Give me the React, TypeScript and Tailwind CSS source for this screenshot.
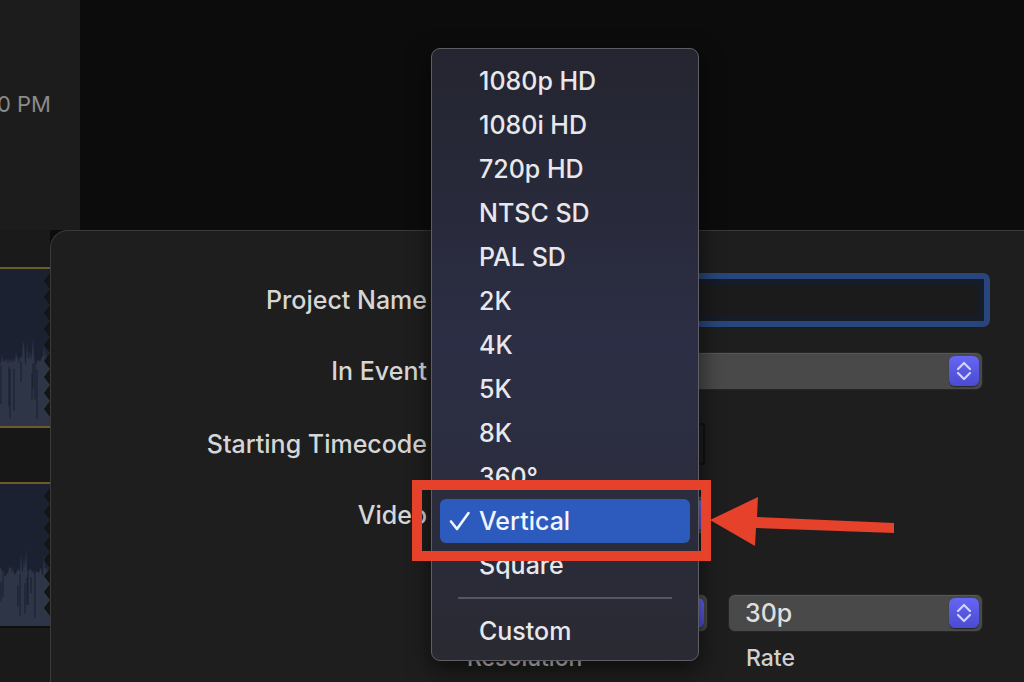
import React from "react";

function rand(seed: number) {
  let s = seed;
  return () => {
    s = (s * 16807) % 2147483647;
    return (s - 1) / 2147483646;
  };
}

function wavePath(seed: number, w: number, h: number, base: number, amp: number) {
  const r = rand(seed);
  let d = `M0 ${h}`;
  for (let x = 0; x <= w; x += 1) {
    const big = r() > 0.82 ? 2.2 : 0.7;
    const y = base - r() * amp * big;
    d += ` L${x} ${y.toFixed(1)}`;
  }
  d += ` L${w} ${h} Z`;
  return d;
}

function darkSpikes(seed: number, w: number, top: number, bottom: number) {
  const r = rand(seed);
  let d = "";
  for (let i = 0; i < 9; i++) {
    const x = Math.floor(r() * (w - 6)) + 1;
    const y1 = top + r() * 15;
    const y2 = y1 + 15 + r() * (bottom - y1 - 15);
    d += `M${x} ${y1.toFixed(1)} L${x} ${y2.toFixed(1)} `;
  }
  return d;
}

function zigzag(h: number, start: number) {
  let d = `M50 ${start}`;
  for (let y = start; y + 16 <= h; y += 16) {
    d += ` L44 ${y + 8} L50 ${y + 16}`;
  }
  d += " Z";
  return d;
}

function Clip({ h, seed, base, amp, goldBottom }: { h: number; seed: number; base: number; amp: number; goldBottom: boolean }) {
  return (
    <div className="flex flex-col" style={{ height: h }}>
      <div className="h-[2px] bg-[#6f5b27]" />
      <svg width="50" height={h - 4} viewBox={`0 0 50 ${h - 4}`} className="block">
        <rect x="0" y="0" width="50" height={h - 4} fill="#1b2131" />
        <path d={wavePath(seed, 50, h - 4, base, amp)} fill="#2d3547" />
        <path d={darkSpikes(seed + 7, 44, base - 5, h - 10)} stroke="#1c2232" strokeWidth="1.2" />
        <path d={zigzag(h - 4, 4)} fill="#141414" />
      </svg>
      <div className={goldBottom ? "h-[2px] bg-[#6f5b27]" : "h-[2px] bg-[#0e0e0e]"} />
    </div>
  );
}

function Stepper() {
  return (
    <div className="w-[30px] h-[30px] rounded-[6px] bg-linear-to-b from-[#6666f4] to-[#4a4ad2] flex items-center justify-center shadow-[0_1px_1px_rgba(0,0,0,0.5)]">
      <svg width="16" height="20" viewBox="0 0 16 20" fill="none">
        <path d="M2 8 L8 2 L14 8" stroke="#d2d2ff" strokeWidth="2.2" strokeLinecap="round" strokeLinejoin="round" />
        <path d="M2 12 L8 18 L14 12" stroke="#d2d2ff" strokeWidth="2.2" strokeLinecap="round" strokeLinejoin="round" />
      </svg>
    </div>
  );
}

function Popup({ w, children }: { w: number; children?: React.ReactNode }) {
  return (
    <div
      className="h-[38px] rounded-[7px] bg-[#494949] border border-[#262626] shadow-[inset_0_1px_0_rgba(255,255,255,0.08)] flex items-center justify-between pl-[16px] pr-[3px]"
      style={{ width: w }}
    >
      <span className="text-[25px] font-medium text-[#dedede] leading-none">{children}</span>
      <Stepper />
    </div>
  );
}

const items = ["1080p HD", "1080i HD", "720p HD", "NTSC SD", "PAL SD", "2K", "4K", "5K", "8K", "360°", "Vertical", "Square"];

function Menu() {
  return (
    <div className="absolute left-[431px] top-[48px] w-[268px] h-[613px] rounded-[9px] border border-[#5e5e64] bg-linear-to-b from-[#242530] via-[#2c2e45] to-[#2a2a33] shadow-[0_8px_24px_rgba(0,0,0,0.6)] pt-[10px] text-[#e8e8ec] font-medium">
      {items.map((it) => {
        const sel = it === "Vertical";
        return (
          <div
            key={it}
            className={
              sel
                ? "mx-[8px] h-[44px] rounded-[6px] bg-[#2c5abd] flex items-center pl-[9px] text-[25px] leading-none text-[#f2f4ff]"
                : "mx-[8px] h-[44px] rounded-[6px] flex items-center pl-[39px] text-[25px] leading-none"
            }
          >
            {sel && (
              <svg width="22" height="20" viewBox="0 0 22 20" fill="none" className="mr-[8px]">
                <path d="M2 10.5 L8 18 L19.5 2" stroke="#f2f4ff" strokeWidth="2.6" strokeLinecap="round" strokeLinejoin="round" />
              </svg>
            )}
            {it}
          </div>
        );
      })}
      <div className="h-[22px] flex items-center px-[26px]">
        <div className="h-[2px] w-full bg-[#56565c]" />
      </div>
      <div className="mx-[8px] h-[44px] rounded-[6px] flex items-center pl-[39px] text-[25px] leading-none">Custom</div>
    </div>
  );
}

function Label({ children }: { children: React.ReactNode }) {
  return <div className="w-[376px] shrink-0 text-right text-[25px] font-medium leading-none text-[#d6d6d6]">{children}</div>;
}

export default function App() {
  return (
    <div className="relative w-[1024px] h-[682px] overflow-hidden bg-[#0c0c0c] flex flex-col font-['Inter','Noto_Sans',sans-serif]">
      <div className="flex h-[230px] shrink-0">
        <div className="w-[80px] bg-[#1c1c1c] pt-[92px]">
          <div className="w-[51px] flex justify-end overflow-hidden whitespace-nowrap text-[22px] leading-[24px] text-[#8b8b8b]">0 PM</div>
        </div>
        <div className="flex-1 bg-[#0c0c0c]" />
      </div>
      <div className="flex flex-1 min-h-0">
        <div className="w-[50px] shrink-0 bg-[#1a1a1a] flex flex-col pt-[37px]">
          <Clip h={161} seed={11} base={96} amp={13} goldBottom={true} />
          <div className="h-[54px] bg-[#171717]" />
          <Clip h={146} seed={29} base={92} amp={13} goldBottom={false} />
        </div>
        <div className="flex-1 bg-[#1e1e1e] rounded-tl-[18px] border-t border-l border-[#3a3a3a] flex flex-col pt-[42px]">
          <div className="flex items-center h-[54px]">
            <Label>Project Name</Label>
            <div className="ml-[16px] w-[547px] h-[54px] rounded-[7px] border-[6px] border-[#28467b]">
              <div className="h-full border-[6px] border-[#161c28] bg-[#1b1b1b] rounded-[2px]" />
            </div>
          </div>
          <div className="flex items-center h-[38px] mt-[25px]">
            <Label>In Event</Label>
            <div className="ml-[22px]">
              <Popup w={534} />
            </div>
          </div>
          <div className="flex items-center h-[42px] mt-[33px]">
            <Label>Starting Timecode</Label>
            <div className="ml-[22px] w-[256px] h-[42px] rounded-[3px] border-2 border-[#111111] bg-[#1c1c1c]" />
          </div>
          <div className="flex items-center h-[38px] mt-[31px]">
            <Label>Video</Label>
            <div className="ml-[22px]">
              <Popup w={259} />
            </div>
          </div>
          <div className="flex items-center h-[38px] mt-[60px] ml-[398px] gap-[20px]">
            <Popup w={259} />
            <Popup w={255}>30p</Popup>
          </div>
          <div className="flex items-center h-[24px] mt-[14px] ml-[398px] gap-[20px] text-[23px] font-medium leading-none text-[#d0d0d0]">
            <div className="w-[259px] pl-[18px]">Resolution</div>
            <div className="w-[255px] pl-[18px]">Rate</div>
          </div>
        </div>
      </div>

      <Menu />

      <div className="absolute left-[412px] top-[480px] w-[299px] h-[81px] border-[10px] border-[#e6412b] pointer-events-none" />
      <svg className="absolute left-0 top-0 pointer-events-none" width="1024" height="682" viewBox="0 0 1024 682">
        <polygon points="710,520 758,497 757,517 894,523 894,533 756,528 755,546" fill="#e6412b" />
      </svg>
    </div>
  );
}
